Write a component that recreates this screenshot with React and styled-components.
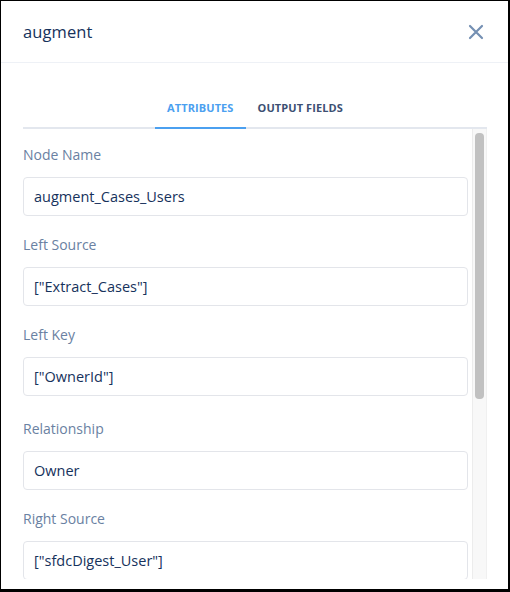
import styled, { createGlobalStyle } from "styled-components";

const GlobalStyle = createGlobalStyle`
  html, body {
    margin: 0;
    padding: 0;
    background: #fff;
  }
  * {
    box-sizing: border-box;
  }
`;

const fields = [
  { label: "Node Name", value: "augment_Cases_Users" },
  { label: "Left Source", value: '["Extract_Cases"]' },
  { label: "Left Key", value: '["OwnerId"]' },
  { label: "Relationship", value: "Owner", extra: 4 },
  { label: "Right Source", value: '["sfdcDigest_User"]' },
];

function App() {
  return (
    <>
      <GlobalStyle />
      <Panel>
        <Header>
          <Title>augment</Title>
          <CloseButton aria-label="Close">
            <svg width="16" height="16" viewBox="0 0 16 16">
              <path d="M2 2 L14 14 M14 2 L2 14" stroke="currentColor" strokeWidth="2.2" strokeLinecap="round" />
            </svg>
          </CloseButton>
        </Header>
        <Body>
          <TabList>
            <Tab $active>Attributes</Tab>
            <Tab>Output Fields</Tab>
          </TabList>
          <ScrollArea>
            <FieldList>
              {fields.map((f) => (
                <Field key={f.label} $extra={f.extra}>
                  <Label>{f.label}</Label>
                  <Input>{f.value}</Input>
                </Field>
              ))}
            </FieldList>
            <Track>
              <Thumb />
            </Track>
          </ScrollArea>
        </Body>
      </Panel>
    </>
  );
}

const Panel = styled.div`
  width: 510px;
  height: 592px;
  display: flex;
  flex-direction: column;
  border: 1px solid #000;
  border-right-width: 2px;
  border-bottom-width: 3px;
  background: #fff;
  font-family: "Open Sans", "Liberation Sans", sans-serif;
  overflow: hidden;
`;

const Header = styled.div`
  height: 62px;
  flex: none;
  display: flex;
  align-items: center;
  justify-content: space-between;
  padding: 0 24px 0 22px;
  border-bottom: 1px solid #eef1f6;
`;

const Title = styled.h2`
  margin: 0;
  font-size: 16.5px;
  font-weight: 400;
  color: #16325c;
  letter-spacing: 0.1px;
`;

const CloseButton = styled.div`
  display: flex;
  align-items: center;
  color: #7590b3;
`;

const Body = styled.div`
  flex: 1;
  min-height: 0;
  display: flex;
  flex-direction: column;
  padding: 28px 21px 10px 22px;
`;

const TabList = styled.div`
  display: flex;
  justify-content: center;
  border-bottom: 2px solid #e3e7ee;
  flex: none;
`;

const Tab = styled.div`
  height: 38px;
  padding: 9px 12px 0;
  margin-bottom: -2px;
  font-size: 11px;
  font-weight: 700;
  letter-spacing: 0.1px;
  text-transform: uppercase;
  color: ${(p) => (p.$active ? "#4ba0f0" : "#3c5073")};
  border-bottom: 2px solid ${(p) => (p.$active ? "#4ba0f0" : "transparent")};
`;

const ScrollArea = styled.div`
  flex: 1;
  min-height: 0;
  display: flex;
  overflow: hidden;
`;

const FieldList = styled.div`
  flex: 1;
  padding: 16px 4px 0 0;
  display: flex;
  flex-direction: column;
  gap: 19px;
`;

const Field = styled.div`
  display: flex;
  flex-direction: column;
  gap: 12px;
  margin-top: ${(p) => p.$extra || 0}px;
`;

const Label = styled.div`
  font-size: 14px;
  line-height: 20px;
  color: #6a81a2;
`;

const Input = styled.div`
  height: 39px;
  flex: none;
  display: flex;
  align-items: center;
  padding: 0 10px;
  border: 1px solid #e3e5ea;
  border-radius: 4px;
  font-size: 14.5px;
  color: #16325c;
`;

const Track = styled.div`
  width: 15px;
  flex: none;
  background: #f8f8f8;
  border-left: 1px solid #ececec;
  border-right: 1px solid #f0f0f0;
  padding: 4px 2px 0 2px;
`;

const Thumb = styled.div`
  height: 266px;
  border-radius: 4px;
  background: #c1c1c1;
`;

export default App;
